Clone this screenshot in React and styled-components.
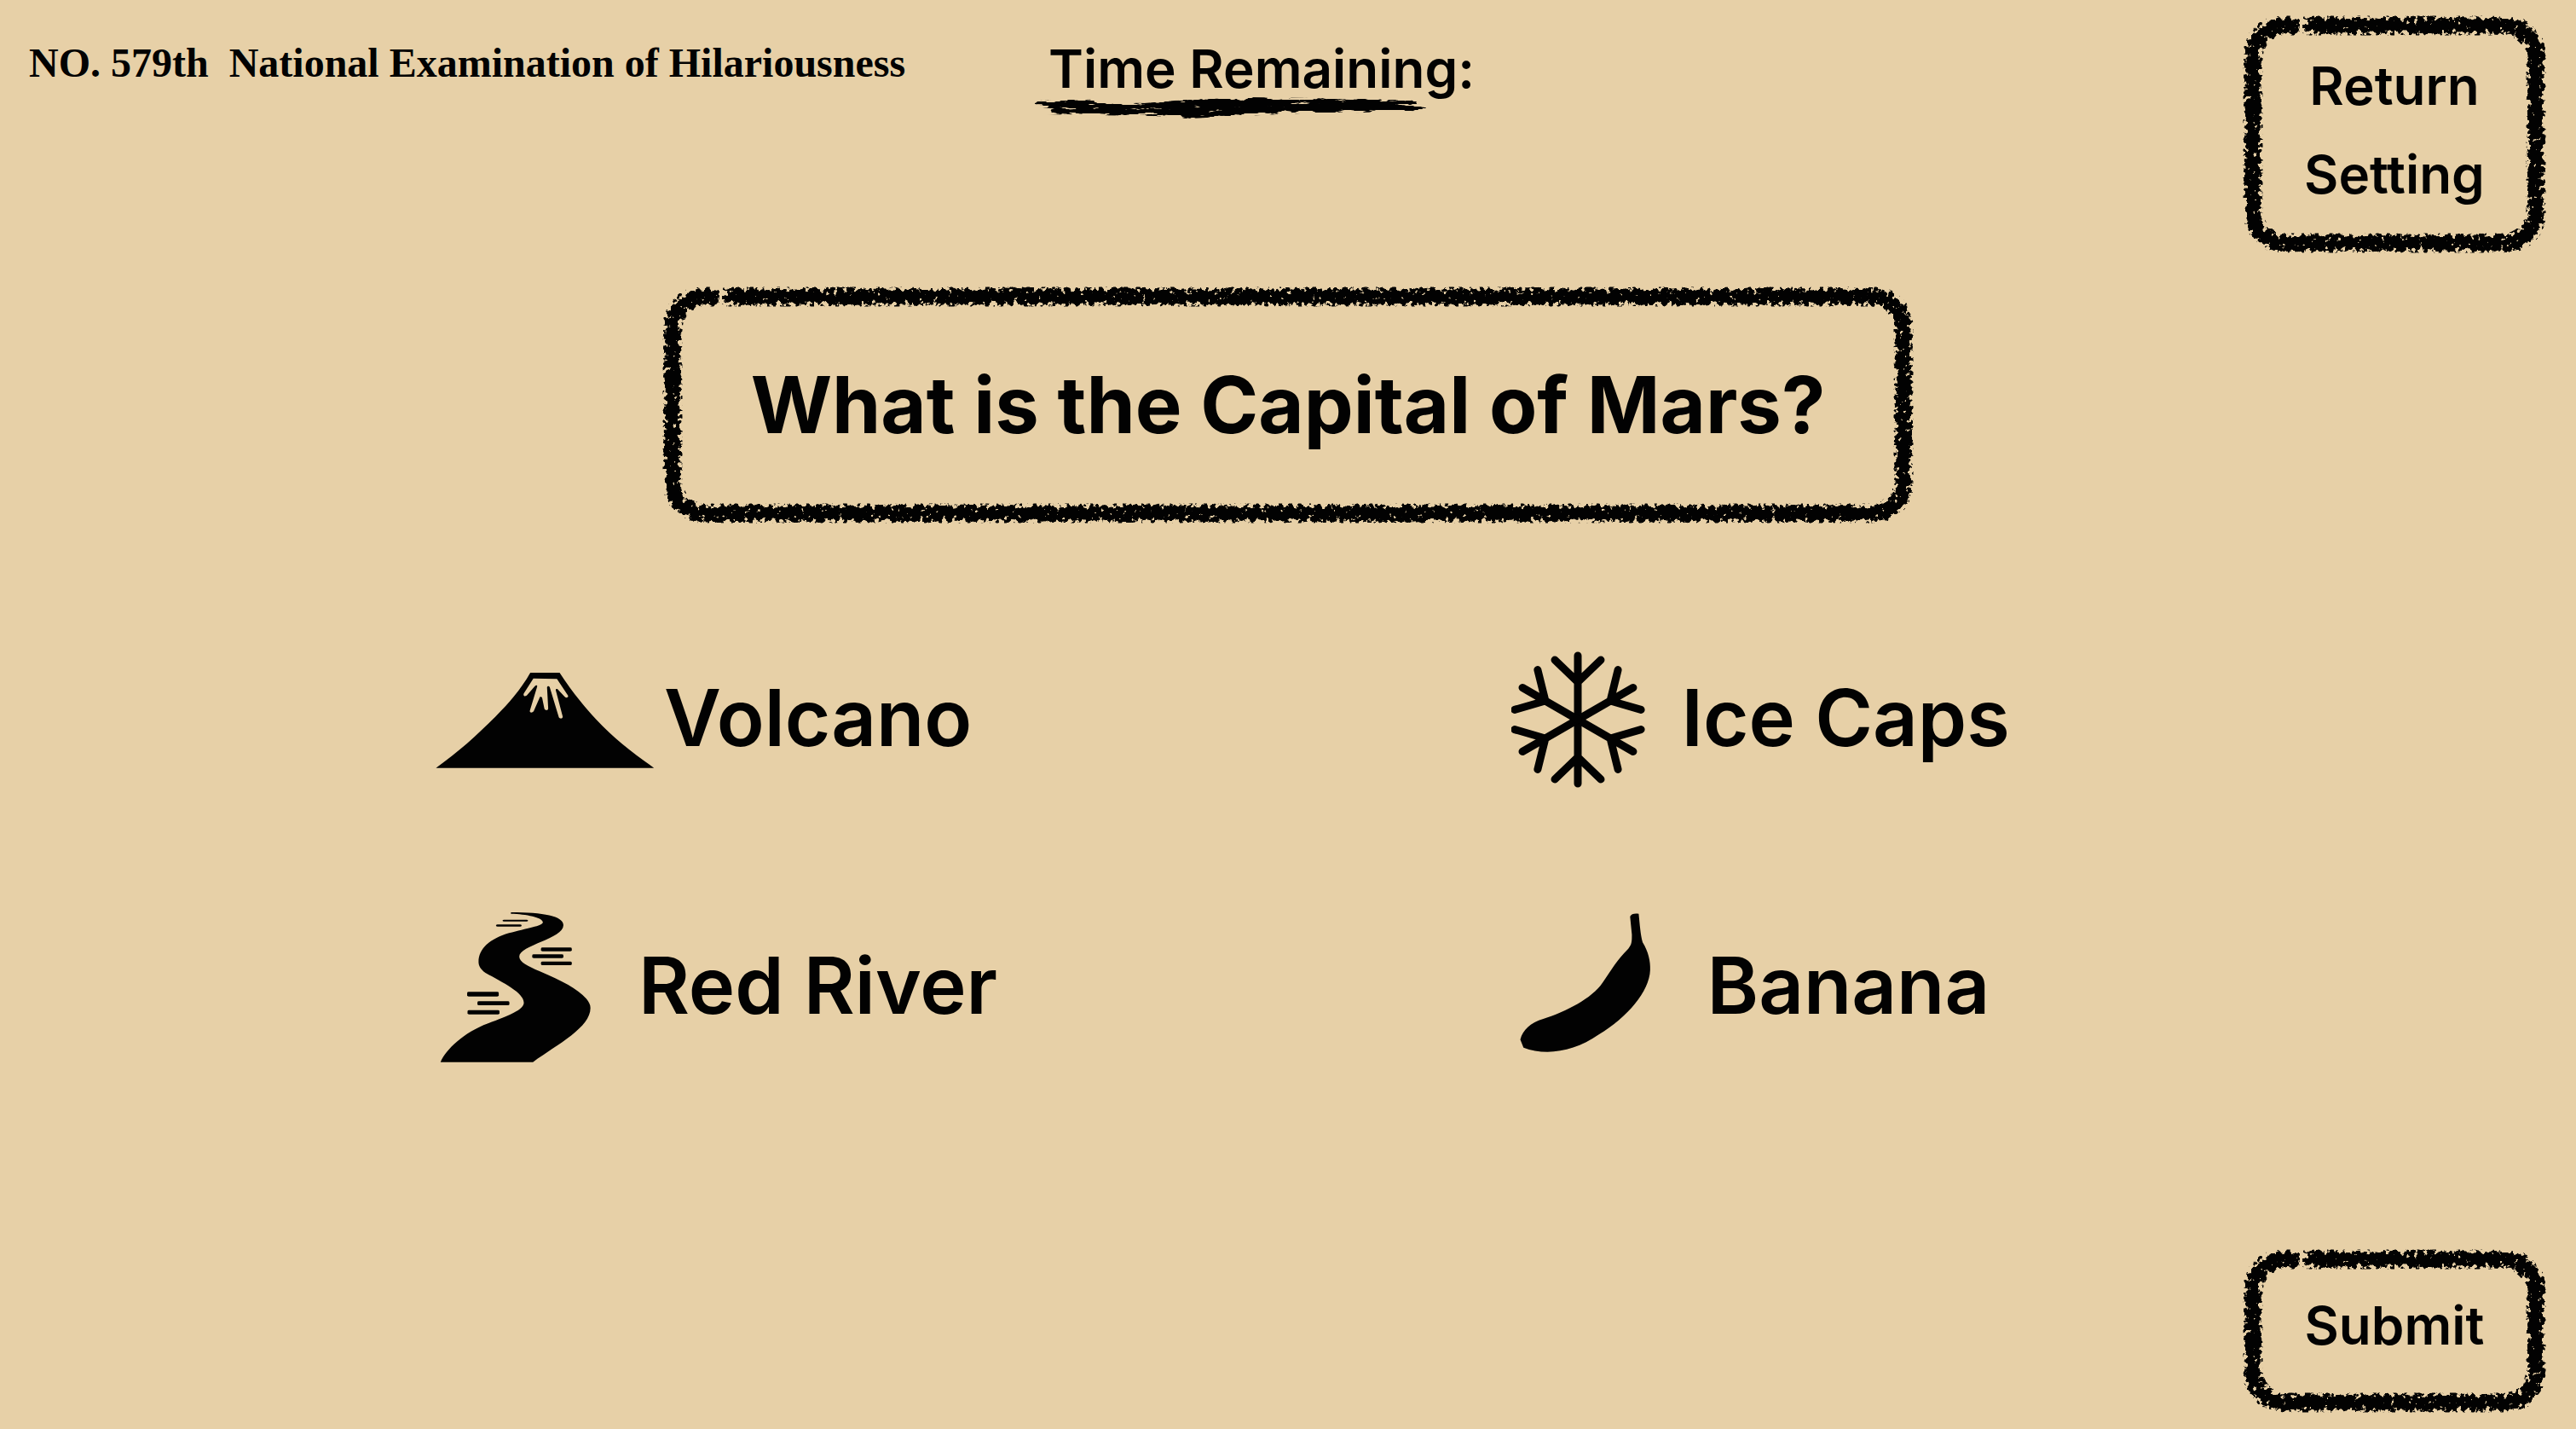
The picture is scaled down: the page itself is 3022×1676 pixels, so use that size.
import React from "react";
import styled, { createGlobalStyle } from "styled-components";

const ink = "#020202";
const paper = "#e7d0a7";

const GlobalStyle = createGlobalStyle`
  *, *::before, *::after { box-sizing: border-box; }
  body {
    margin: 0;
    background: ${paper};
    color: ${ink};
    font-family: Inter, "Liberation Sans", sans-serif;
  }
  h1, h2, p { margin: 0; }
  button { font: inherit; color: inherit; background: none; border: 0; padding: 0; cursor: pointer; }
`;

const Page = styled.div`
  min-height: 100vh;
  display: flex;
  flex-direction: column;
`;

const Header = styled.header`
  display: flex;
  align-items: flex-start;
  padding: 18px 36px 0 34px;
`;

const ExamTitle = styled.h1`
  flex: none;
  padding-top: 24px;
  font-family: "Liberation Serif", serif;
  font-size: 48px;
  line-height: 64px;
  font-weight: 700;
  white-space: pre;
`;

const Timer = styled.div`
  margin-left: 152px;
  padding-top: 23px;
`;

const TimerLabel = styled.p`
  padding-left: 16px;
  font-size: 62px;
  line-height: 80px;
  font-weight: 600;
  white-space: nowrap;
`;

const Underline = styled.svg`
  display: block;
  width: 468px;
  height: 32px;
  margin-top: -8px;
  overflow: visible;
`;

const Frame = styled.div`
  position: relative;
  width: ${(p) => (p.$wide ? "1466px" : "354px")};
`;

const FrameArt = styled.svg`
  position: absolute;
  inset: 0;
  width: 100%;
  height: 100%;
  overflow: visible;
  pointer-events: none;
`;

const FrameLine = styled.rect`
  x: 11px;
  y: 12px;
  width: calc(100% - 22px);
  height: calc(100% - 23px);
  rx: 36px;
  fill: none;
  stroke: ${ink};
  stroke-width: 17px;
  stroke-dasharray: 16 9 9999;
`;

const Menu = styled.nav`
  display: flex;
  flex-direction: column;
  padding: 31px 0 39px;
`;

const TopRight = styled.div`
  margin-left: auto;
`;

const TextButton = styled.button`
  width: 100%;
  font-size: 62px;
  line-height: 104px;
  font-weight: 600;
  text-align: center;
`;

const QuestionRow = styled.main`
  display: flex;
  justify-content: center;
  padding-top: 40px;
`;

const Question = styled.h2`
  padding: 79px 0 78px;
  font-size: 92px;
  line-height: 120px;
  font-weight: 700;
  text-align: center;
  white-space: nowrap;
`;

const Options = styled.section`
  display: grid;
  grid-template-columns: 1fr 1fr;
  gap: 134px 12px;
  padding: 139px 0 0 511px;
`;

const Option = styled.button`
  justify-self: start;
  display: flex;
  align-items: center;
  font-size: 92px;
  line-height: 120px;
  font-weight: 600;
  white-space: nowrap;
`;

const OptionIcon = styled.svg`
  flex: none;
  height: 180px;
  fill: ${ink};
`;

const Footer = styled.footer`
  display: flex;
  justify-content: flex-end;
  margin-top: auto;
  padding: 0 36px 20px;
`;

const SubmitArea = styled.div`
  padding: 38px 0 49px;
`;

const Filters = styled.svg`
  position: absolute;
  width: 0;
  height: 0;
`;

function InkFilters() {
  return (
    <Filters aria-hidden="true">
      <defs>
        <filter id="crayon" x="-10%" y="-15%" width="120%" height="130%" colorInterpolationFilters="sRGB">
          <feMorphology in="SourceAlpha" operator="dilate" radius="3" result="reach" />
          <feGaussianBlur in="SourceAlpha" stdDeviation="3" result="soft" />
          <feTurbulence type="fractalNoise" baseFrequency="0.18" numOctaves="3" seed="4" />
          <feColorMatrix values="0 0 0 0 0  0 0 0 0 0  0 0 0 0 0  1 0 0 0 0" result="grain" />
          <feComposite in="soft" in2="grain" operator="arithmetic" k2="1" k3="2.2" k4="-1.05" />
          <feColorMatrix values="0 0 0 0 0.008  0 0 0 0 0.008  0 0 0 0 0.008  0 0 0 6 -2.3" />
          <feComposite in2="reach" operator="in" />
        </filter>
        <filter id="brush" x="-5%" y="-50%" width="110%" height="200%" colorInterpolationFilters="sRGB">
          <feMorphology in="SourceAlpha" operator="dilate" radius="2" result="reach" />
          <feGaussianBlur in="SourceAlpha" stdDeviation="3 1" result="soft" />
          <feTurbulence type="fractalNoise" baseFrequency="0.04 0.3" numOctaves="4" seed="9" />
          <feColorMatrix values="0 0 0 0 0  0 0 0 0 0  0 0 0 0 0  1 0 0 0 0" result="grain" />
          <feComposite in="soft" in2="grain" operator="arithmetic" k2="1" k3="2.4" k4="-1.1" />
          <feColorMatrix values="0 0 0 0 0.008  0 0 0 0 0.008  0 0 0 0 0.008  0 0 0 6 -2.5" />
          <feComposite in2="reach" operator="in" />
        </filter>
      </defs>
    </Filters>
  );
}

function CrayonFrame({ wide, children }) {
  return (
    <Frame $wide={wide}>
      <FrameArt aria-hidden="true">
        <FrameLine filter="url(#crayon)" />
      </FrameArt>
      {children}
    </Frame>
  );
}

function Volcano() {
  return (
    <OptionIcon width="268" viewBox="0 0 268 180" aria-hidden="true">
      <path
        transform="translate(-21 9) scale(0.4464 0.3333)"
        fillRule="evenodd"
        d="M296 84H373C410 160 440 205 470 250C515 315 565 366 621 419H48C105 366 155 305 205 238C240 190 270 145 296 84ZM304 104L366 106L395 164C397 172 390 174 386 168L367 141C364 140 362 143 363 146L381 238C382 246 374 248 371 241L347 135C345 130 341 130 340 136L343 209C343 217 336 218 333 211L327 172C325 168 321 168 320 173L305 219C301 227 293 225 295 217L314 133C315 127 311 127 308 131L288 162C283 170 276 166 279 157Z"
      />
    </OptionIcon>
  );
}

function Snowflake() {
  return (
    <OptionIcon width="200" viewBox="0 0 200 180" aria-hidden="true">
      <g transform="translate(78 92)" stroke={ink} strokeWidth="9" strokeLinecap="round" fill="none">
        {[0, 60, 120, 180, 240, 300].map((angle) => (
          <path key={angle} transform={`rotate(${angle})`} d="M0 0V-75M-27 -70L0 -44L27 -70" />
        ))}
      </g>
    </OptionIcon>
  );
}

const ripples = [
  [223, 113, 67, 6],
  [206, 130, 67, 7],
  [324, 211, 81, 13],
  [301, 235, 82, 13],
  [324, 260, 81, 13],
  [130, 367, 83, 16],
  [157, 400, 84, 14],
  [131, 431, 84, 15],
];

function River() {
  return (
    <OptionIcon width="238" viewBox="0 0 238 180" aria-hidden="true">
      <g transform="translate(-21 -25) scale(0.4464 0.3333)">
        <path d="M245 87C330 87 383 100 383 132C383 180 267 203 267 243C267 262 290 277 320 294C380 328 420 356 443 391C450 402 454 412 454 424C454 492 370 550 303 614H60C75 570 120 510 185 478C240 450 279 430 279 405C279 370 225 335 178 300C165 288 160 275 160 262C160 215 190 180 240 160C285 143 329 135 329 122C329 105 285 93 245 92Z" />
        {ripples.map(([x, y, w, h]) => (
          <rect key={`${x}-${y}`} x={x} y={y} width={w} height={h} rx="4" />
        ))}
      </g>
    </OptionIcon>
  );
}

function Banana() {
  return (
    <OptionIcon width="230" viewBox="0 0 230 180" aria-hidden="true">
      <path
        transform="translate(-32 -25) scale(0.4209 0.3333)"
        d="M407 102C410 92 420 90 431 92C434 130 436 165 442 193C458 225 464 260 463 290C461 365 400 455 320 517C250 580 170 592 110 563L101 535C108 500 130 475 165 462C230 435 300 390 330 335C355 290 370 255 402 215C412 200 412 190 412 165Z"
      />
    </OptionIcon>
  );
}

const options = [
  { label: "Volcano", Icon: Volcano },
  { label: "Ice Caps", Icon: Snowflake },
  { label: "Red River", Icon: River },
  { label: "Banana", Icon: Banana },
];

export default function App() {
  return (
    <>
      <GlobalStyle />
      <InkFilters />
      <Page>
        <Header>
          <ExamTitle>{"NO. 579th  National Examination of Hilariousness"}</ExamTitle>
          <Timer>
            <TimerLabel>Time Remaining:</TimerLabel>
            <Underline viewBox="0 0 468 32" aria-hidden="true">
              <path
                filter="url(#brush)"
                d="M2 7L68 5L72 9L130 10L190 5L250 3L330 4L446 5L446 8L400 10L464 12L455 15L380 17L310 18L240 21L180 24L140 21L60 20L16 19L20 12L2 10Z"
              />
            </Underline>
          </Timer>
          <TopRight>
            <CrayonFrame>
              <Menu>
                <TextButton type="button">Return</TextButton>
                <TextButton type="button">Setting</TextButton>
              </Menu>
            </CrayonFrame>
          </TopRight>
        </Header>
        <QuestionRow>
          <CrayonFrame wide>
            <Question>What is the Capital of Mars?</Question>
          </CrayonFrame>
        </QuestionRow>
        <Options aria-label="Answers">
          {options.map(({ label, Icon }) => (
            <Option key={label} type="button">
              <Icon />
              {label}
            </Option>
          ))}
        </Options>
        <Footer>
          <CrayonFrame>
            <SubmitArea>
              <TextButton type="submit">Submit</TextButton>
            </SubmitArea>
          </CrayonFrame>
        </Footer>
      </Page>
    </>
  );
}
